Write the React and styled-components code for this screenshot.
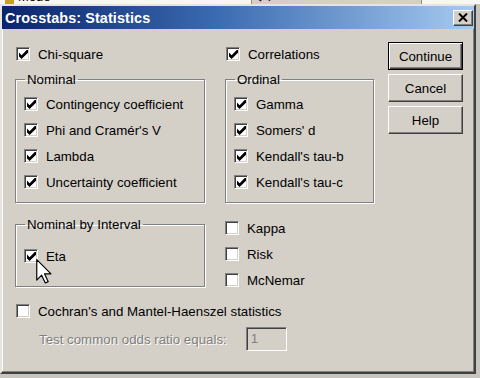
import styled, { createGlobalStyle, css } from "styled-components";

const GlobalStyle = createGlobalStyle`
  html, body { margin: 0; padding: 0; }
  body {
    width: 480px;
    height: 378px;
    overflow: hidden;
    background: #c8c5be;
    font-family: "Liberation Sans", Arial, sans-serif;
  }
`;

const Screen = styled.div`
  width: 480px;
  height: 378px;
  overflow: hidden;
`;

// bit of the app window behind the dialog
const BackStrip = styled.div`
  height: 4px;
  overflow: hidden;
  display: flex;
  background: #f6f6f4;
`;

const BackCell = styled.div`
  width: ${(p) => p.$w}px;
  flex: none;
  display: flex;
  align-items: flex-end;
  gap: 4px;
  padding-left: 5px;
  margin-top: -11px;
  height: 15px;
  font-size: 13px;
  color: #000;
  background: ${(p) => (p.$gray ? "#d4d0c8" : "transparent")};
  border-right: 1px solid #909090;
`;

const BackIcon = styled.span`
  width: 9px;
  height: 9px;
  background: #c8a020;
`;

const Window = styled.div`
  width: 476px;
  height: 370px;
  box-sizing: border-box;
  background: #d4d0c8;
  border: 2px solid;
  border-color: #e6e4de #404040 #404040 #e6e4de;
  box-shadow: inset -1px -1px 0 #808080, inset 1px 1px 0 #fff;
  display: flex;
  flex-direction: column;
`;

const TitleBar = styled.div`
  height: 23px;
  flex: none;
  display: flex;
  align-items: center;
  padding: 0 1px 0 3px;
  background: linear-gradient(to right, #0a246a 0%, #3a6ab0 45%, #a6caf0 100%);
`;

const TitleText = styled.div`
  color: #fff;
  font-weight: bold;
  font-size: 14.4px;
  letter-spacing: 0.1px;
`;

const CloseButton = styled.div`
  margin-left: auto;
  width: 20px;
  height: 16px;
  box-sizing: border-box;
  display: flex;
  align-items: center;
  justify-content: center;
  background: #d4d0c8;
  border: 1px solid;
  border-color: #fff #404040 #404040 #fff;
  box-shadow: inset -1px -1px 0 #808080;
`;

const Body = styled.div`
  flex: 1;
  display: flex;
  align-items: flex-start;
  padding: 12px 11px 0 13px;
`;

const Main = styled.div`
  display: grid;
  grid-template-columns: 190px 149px;
  column-gap: 20px;
  align-items: start;
  align-content: start;
`;

const CheckRow = styled.label`
  height: 26px;
  display: flex;
  align-items: center;
  gap: 8px;
  padding-left: ${(p) => p.$indent || 0}px;
  font-size: 13.3px;
  color: #000;
`;

const Box = styled.span`
  position: relative;
  width: 14px;
  height: 14px;
  flex: none;
  box-sizing: border-box;
  background: #fff;
  border: 1px solid;
  border-color: #808080 #fff #fff #808080;
  box-shadow: inset 1px 1px 0 #404040, inset -1px -1px 0 #d4d0c8;
  display: flex;
  align-items: center;
  justify-content: center;
`;

const Group = styled.fieldset`
  margin: ${(p) => p.$mt}px 0 0 0;
  padding: ${(p) => p.$pt}px 8px ${(p) => p.$pb}px 8px;
  border: 1px solid #808080;
  box-shadow: 1px 1px 0 #fff, inset 1px 1px 0 #fff;
  min-width: 0;
`;

const Legend = styled.legend`
  padding: 0 2px;
  margin-left: 1px;
  font-size: 13.3px;
  line-height: 15px;
  color: #000;
`;

const Stack = styled.div`
  display: flex;
  flex-direction: column;
  margin-top: ${(p) => p.$mt || 0}px;
`;

const WideRow = styled.div`
  grid-column: 1 / -1;
  margin-top: ${(p) => p.$mt || 0}px;
`;

const OddsRow = styled.div`
  grid-column: 1 / -1;
  margin-top: 3px;
  height: 24px;
  display: flex;
  align-items: center;
  gap: 19px;
  padding-left: 24px;
`;

const DisabledText = styled.span`
  font-size: 13.3px;
  color: #808080;
  text-shadow: 1px 1px 0 #fff;
`;

const ValueBox = styled.div`
  width: 41px;
  height: 24px;
  box-sizing: border-box;
  border: 1px solid;
  border-color: #808080 #fff #fff #808080;
  box-shadow: inset 1px 1px 0 #404040, inset -1px -1px 0 #d4d0c8;
  background: #d4d0c8;
  padding: 3px 0 0 4px;
  font-size: 13.3px;
  color: #808080;
`;

const ButtonColumn = styled.div`
  display: flex;
  flex-direction: column;
  gap: 4px;
  padding-top: 1px;
  margin-left: 14px;
`;

const Button = styled.div`
  width: 75px;
  height: 28px;
  box-sizing: border-box;
  display: flex;
  align-items: center;
  justify-content: center;
  background: #d4d0c8;
  font-size: 13.3px;
  color: #000;
  border: 1px solid;
  border-color: #fff #404040 #404040 #fff;
  box-shadow: inset -1px -1px 0 #808080;
  ${(p) =>
    p.$default &&
    css`
      border: 1px solid #000;
      box-shadow: inset 1px 1px 0 #fff, inset -1px -1px 0 #404040,
        inset -2px -2px 0 #808080;
    `}
`;

const Cursor = styled.svg`
  position: absolute;
  left: 11px;
  top: 9px;
`;

const Check = () => (
  <svg width="9" height="9" viewBox="0 0 7 7">
    <polygon points="0,2 2,4 6,0 7,0 7,2.2 2,7 0,5" fill="#000" />
  </svg>
);

const Checkbox = ({ checked, children, indent, cursor }) => (
  <CheckRow $indent={indent}>
    <Box>
      {checked && <Check />}
      {cursor && (
        <Cursor width="16" height="25" viewBox="0 0 12 19">
          <path
            d="M0.5 0.5 V16 L4.2 12.3 L7 18.2 L9.2 17.2 L6.4 11.3 H11.3 Z"
            fill="#fff"
            stroke="#000"
            strokeWidth="0.9"
            strokeLinejoin="round"
          />
        </Cursor>
      )}
    </Box>
    {children}
  </CheckRow>
);

export default function App() {
  return (
    <Screen>
      <GlobalStyle />
      <BackStrip>
        <BackCell $w={246}>
          <BackIcon />
          Mode
        </BackCell>
        <BackCell $w={164} $gray>
          ↕ ✗
        </BackCell>
      </BackStrip>
      <Window>
        <TitleBar>
          <TitleText>Crosstabs: Statistics</TitleText>
          <CloseButton>
            <svg width="10" height="9" viewBox="0 0 10 9">
              <path d="M1 0.5 L9 8.5 M9 0.5 L1 8.5" stroke="#000" strokeWidth="2" />
            </svg>
          </CloseButton>
        </TitleBar>
        <Body>
          <Main>
            <Checkbox checked indent={1}>Chi-square</Checkbox>
            <Checkbox checked indent={1}>Correlations</Checkbox>

            <Group $mt={5} $pt={4} $pb={7}>
              <Legend>Nominal</Legend>
              <Checkbox checked>Contingency coefficient</Checkbox>
              <Checkbox checked>Phi and Cramér's V</Checkbox>
              <Checkbox checked>Lambda</Checkbox>
              <Checkbox checked>Uncertainty coefficient</Checkbox>
            </Group>
            <Group $mt={5} $pt={4} $pb={7}>
              <Legend>Ordinal</Legend>
              <Checkbox checked>Gamma</Checkbox>
              <Checkbox checked>Somers' d</Checkbox>
              <Checkbox checked>Kendall's tau-b</Checkbox>
              <Checkbox checked>Kendall's tau-c</Checkbox>
            </Group>

            <Group $mt={14} $pt={11} $pb={17}>
              <Legend>Nominal by Interval</Legend>
              <Checkbox checked cursor>Eta</Checkbox>
            </Group>
            <Stack $mt={12}>
              <Checkbox>Kappa</Checkbox>
              <Checkbox>Risk</Checkbox>
              <Checkbox>McNemar</Checkbox>
            </Stack>

            <WideRow $mt={5}>
              <Checkbox indent={1}>Cochran's and Mantel-Haenszel statistics</Checkbox>
            </WideRow>
            <OddsRow>
              <DisabledText>Test common odds ratio equals:</DisabledText>
              <ValueBox>1</ValueBox>
            </OddsRow>
          </Main>
          <ButtonColumn>
            <Button $default>Continue</Button>
            <Button>Cancel</Button>
            <Button>Help</Button>
          </ButtonColumn>
        </Body>
      </Window>
    </Screen>
  );
}
